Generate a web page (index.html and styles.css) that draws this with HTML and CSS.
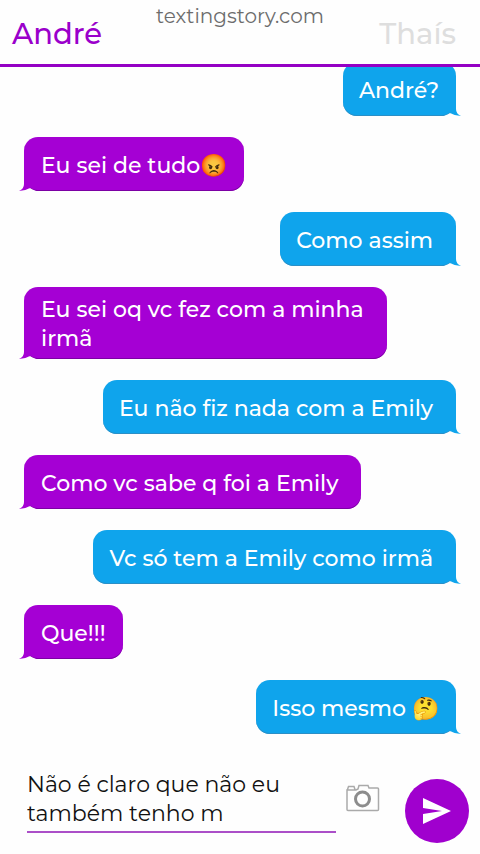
FILE: index.html
```html
<!DOCTYPE html>
<html lang="pt-BR">
<head>
<meta charset="utf-8">
<meta name="viewport" content="width=device-width, initial-scale=1">
<title>TextingStory</title>
<link rel="stylesheet" href="styles.css">
</head>
<body>
<header class="header">
  <button class="name name-active" type="button">André</button>
  <span class="site">textingstory.com</span>
  <button class="name name-idle" type="button">Thaís</button>
</header>
<main class="chat">
  <p class="bubble sent">André?<svg class="tail" viewBox="0 0 17 18" aria-hidden="true"><path class="cut" d="M0 17 Q5 15 6 14 Q10 17 17 17 V18 H0Z"/><path d="M6 0 H12 V10 Q12 15 17 17 Q11 17 6 14Z"/></svg></p>
  <p class="bubble received">Eu sei de tudo<span class="emoji">😡</span><svg class="tail" viewBox="0 0 17 18" aria-hidden="true"><path class="cut" d="M0 17 Q5 15 6 14 Q10 17 17 17 V18 H0Z"/><path d="M6 0 H12 V10 Q12 15 17 17 Q11 17 6 14Z"/></svg></p>
  <p class="bubble sent">Como assim&nbsp;<svg class="tail" viewBox="0 0 17 18" aria-hidden="true"><path class="cut" d="M0 17 Q5 15 6 14 Q10 17 17 17 V18 H0Z"/><path d="M6 0 H12 V10 Q12 15 17 17 Q11 17 6 14Z"/></svg></p>
  <p class="bubble received">Eu sei oq vc fez com a minha irmã<svg class="tail" viewBox="0 0 17 18" aria-hidden="true"><path class="cut" d="M0 17 Q5 15 6 14 Q10 17 17 17 V18 H0Z"/><path d="M6 0 H12 V10 Q12 15 17 17 Q11 17 6 14Z"/></svg></p>
  <p class="bubble sent">Eu não fiz nada com a Emily&nbsp;<svg class="tail" viewBox="0 0 17 18" aria-hidden="true"><path class="cut" d="M0 17 Q5 15 6 14 Q10 17 17 17 V18 H0Z"/><path d="M6 0 H12 V10 Q12 15 17 17 Q11 17 6 14Z"/></svg></p>
  <p class="bubble received">Como vc sabe q foi a Emily&nbsp;<svg class="tail" viewBox="0 0 17 18" aria-hidden="true"><path class="cut" d="M0 17 Q5 15 6 14 Q10 17 17 17 V18 H0Z"/><path d="M6 0 H12 V10 Q12 15 17 17 Q11 17 6 14Z"/></svg></p>
  <p class="bubble sent">Vc só tem a Emily como irmã&nbsp;<svg class="tail" viewBox="0 0 17 18" aria-hidden="true"><path class="cut" d="M0 17 Q5 15 6 14 Q10 17 17 17 V18 H0Z"/><path d="M6 0 H12 V10 Q12 15 17 17 Q11 17 6 14Z"/></svg></p>
  <p class="bubble received">Que!!!<svg class="tail" viewBox="0 0 17 18" aria-hidden="true"><path class="cut" d="M0 17 Q5 15 6 14 Q10 17 17 17 V18 H0Z"/><path d="M6 0 H12 V10 Q12 15 17 17 Q11 17 6 14Z"/></svg></p>
  <p class="bubble sent">Isso mesmo <span class="emoji">🤔</span><svg class="tail" viewBox="0 0 17 18" aria-hidden="true"><path class="cut" d="M0 17 Q5 15 6 14 Q10 17 17 17 V18 H0Z"/><path d="M6 0 H12 V10 Q12 15 17 17 Q11 17 6 14Z"/></svg></p>
</main>
<form class="composer">
  <textarea class="draft" rows="2" aria-label="Mensagem">Não é claro que não eu também tenho m</textarea>
  <button class="camera" type="button" aria-label="Foto">
    <svg viewBox="0 0 34 28" aria-hidden="true"><path d="M1 6 H10 L12 5 L13 1.500 H22 L23 4 H31.500 Q32.500 4 32.500 5 V25.500 Q32.500 26.500 31.500 26.500 H2 Q1 26.500 1 25.500Z M1.500 5.500 L2.500 2.500 H8 L9 5.500"/><circle class="lens" cx="16.500" cy="15" r="7"/></svg>
  </button>
  <button class="send" type="submit" aria-label="Enviar">
    <svg viewBox="0 0 28 26" aria-hidden="true"><path d="M0 0 L28 13 L0 26 V16 L19 13 L0 10Z"/></svg>
  </button>
</form>
</body>
</html>
```
FILE: styles.css
```css
* {
  box-sizing: border-box;
}

body {
  margin: 0;
  height: 100vh;
  display: flex;
  flex-direction: column;
  background: #fefefe;
  font-family: Montserrat, Inter, "Open Sans", sans-serif;
  font-size: 22px;
  line-height: 29px;
}

button,
textarea {
  margin: 0;
  padding: 0;
  border: 0;
  background: none;
  font: inherit;
}

.header {
  flex: none;
  display: grid;
  grid-template-columns: 1fr auto 1fr;
  align-items: start;
  padding: 3px 12px 10px;
  border-bottom: 3px solid #9400c4;
}

.name {
  margin-top: 11px;
  font-size: 29px;
  font-weight: 500;
  line-height: 40px;
}

.name-active {
  justify-self: start;
  color: #9a00cb;
}

.name-idle {
  justify-self: end;
  margin-right: 12px;
  color: #dedede;
}

.site {
  font-size: 20px;
  line-height: 26px;
  color: #6c6c6c;
}

.chat {
  flex: 1;
  min-height: 0;
  overflow: hidden;
  display: flex;
  flex-direction: column;
  justify-content: flex-end;
  gap: 21px;
  padding: 0 24px 21px;
}

.bubble {
  position: relative;
  flex: none;
  max-width: 84%;
  min-height: 54px;
  margin: 0;
  padding: 8px 17px 6px;
  align-content: center;
  border-radius: 14px;
  color: #fff;
  font-weight: 500;
}

.sent {
  align-self: flex-end;
  padding-left: 16px;
  background: #0fa4ec;
  box-shadow: inset 0 -1px #2b8fc6;
}

.received {
  align-self: flex-start;
  background: #a500d4;
  box-shadow: inset 0 -1px #7c00a4;
}

.tail {
  position: absolute;
  right: -5px;
  bottom: -1px;
  width: 17px;
  height: 18px;
  fill: #0fa4ec;
}

.received .tail {
  right: auto;
  left: -5px;
  fill: #a500d4;
  transform: scaleX(-1);
}

.tail .cut {
  fill: #fefefe;
}

.composer {
  flex: none;
  display: flex;
  align-items: flex-start;
  padding: 15px 11px 11px 27px;
}

.draft {
  flex: 1;
  min-width: 0;
  height: 63px;
  overflow: hidden;
  resize: none;
  outline: 0;
  border-bottom: 2px solid #ab4fc8;
  border-radius: 0;
  color: #111;
}

.camera {
  width: 34px;
  height: 28px;
  margin: 14px 25px 0 10px;
}

.camera svg {
  display: block;
  fill: none;
  stroke: #aaa;
  stroke-width: 1.500;
}

.camera .lens {
  stroke: #8c8c8c;
  stroke-width: 3;
}

.send {
  display: grid;
  place-items: center;
  width: 64px;
  height: 64px;
  margin-top: 9px;
  border-radius: 50%;
  background: #a000ce;
}

.send svg {
  width: 28px;
  height: 26px;
  fill: #fff;
}
```
